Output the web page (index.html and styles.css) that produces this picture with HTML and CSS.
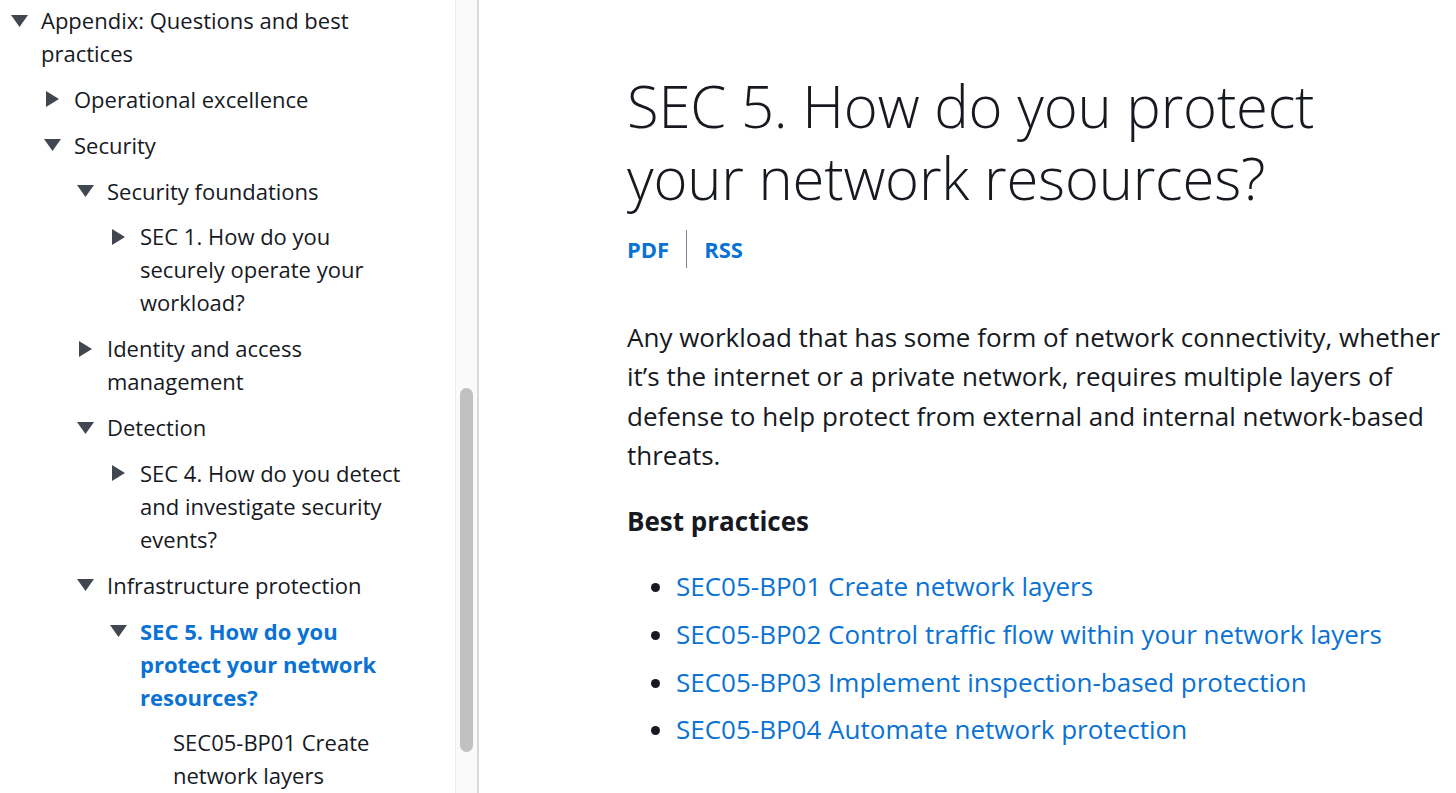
FILE: index.html
```html
<!DOCTYPE html>
<html lang="en">
<head>
<meta charset="utf-8">
<title>SEC 5. How do you protect your network resources?</title>
<link rel="stylesheet" href="styles.css">
</head>
<body>
<div class="page">
  <nav class="sidebar">
    <ul class="tree">
      <li class="node lvl0">
        <div class="row"><span class="tw"><svg class="down" viewBox="0 0 17 12"><path d="M0 0H17L8.5 12Z"/></svg></span><span class="label">Appendix: Questions and best practices</span></div>
        <ul class="tree">
          <li class="node">
            <div class="row"><span class="tw"><svg class="right" viewBox="0 0 13 16"><path d="M0 0L13 8L0 16Z"/></svg></span><span class="label">Operational excellence</span></div>
          </li>
          <li class="node">
            <div class="row"><span class="tw"><svg class="down" viewBox="0 0 17 12"><path d="M0 0H17L8.5 12Z"/></svg></span><span class="label">Security</span></div>
            <ul class="tree">
              <li class="node">
                <div class="row"><span class="tw"><svg class="down" viewBox="0 0 17 12"><path d="M0 0H17L8.5 12Z"/></svg></span><span class="label">Security foundations</span></div>
                <ul class="tree">
                  <li class="node">
                    <div class="row"><span class="tw"><svg class="right" viewBox="0 0 13 16"><path d="M0 0L13 8L0 16Z"/></svg></span><span class="label">SEC 1. How do you securely operate your workload?</span></div>
                  </li>
                </ul>
              </li>
              <li class="node">
                <div class="row"><span class="tw"><svg class="right" viewBox="0 0 13 16"><path d="M0 0L13 8L0 16Z"/></svg></span><span class="label">Identity and access management</span></div>
              </li>
              <li class="node">
                <div class="row"><span class="tw"><svg class="down" viewBox="0 0 17 12"><path d="M0 0H17L8.5 12Z"/></svg></span><span class="label">Detection</span></div>
                <ul class="tree">
                  <li class="node">
                    <div class="row"><span class="tw"><svg class="right" viewBox="0 0 13 16"><path d="M0 0L13 8L0 16Z"/></svg></span><span class="label">SEC 4. How do you detect and investigate security events?</span></div>
                  </li>
                </ul>
              </li>
              <li class="node">
                <div class="row"><span class="tw"><svg class="down" viewBox="0 0 17 12"><path d="M0 0H17L8.5 12Z"/></svg></span><span class="label">Infrastructure protection</span></div>
                <ul class="tree">
                  <li class="node">
                    <div class="row"><span class="tw"><svg class="down" viewBox="0 0 17 12"><path d="M0 0H17L8.5 12Z"/></svg></span><span class="label active">SEC 5. How do you protect your network resources?</span></div>
                    <ul class="tree">
                      <li class="node">
                        <div class="row"><span class="tw"></span><span class="label">SEC05-BP01 Create network layers</span></div>
                      </li>
                    </ul>
                  </li>
                </ul>
              </li>
            </ul>
          </li>
        </ul>
      </li>
    </ul>
  </nav>
  <div class="scrolltrack"><div class="thumb"></div></div>
  <main class="content">
    <h1 class="title">SEC 5. How do you protect your network resources?</h1>
    <div class="doclinks"><a class="doclink" href="#">PDF</a><span class="sep"></span><a class="doclink" href="#">RSS</a></div>
    <p class="intro">Any workload that has some form of network connectivity, whether it’s the internet or a private network, requires multiple layers of defense to help protect from external and internal network-based threats.</p>
    <h2 class="subhead">Best practices</h2>
    <ul class="bplist">
      <li><a href="#">SEC05-BP01 Create network layers</a></li>
      <li><a href="#">SEC05-BP02 Control traffic flow within your network layers</a></li>
      <li><a href="#">SEC05-BP03 Implement inspection-based protection</a></li>
      <li><a href="#">SEC05-BP04 Automate network protection</a></li>
    </ul>
  </main>
</div>
</body>
</html>
```
FILE: styles.css
```css
html, body {
  margin: 0;
  padding: 0;
  background: #ffffff;
}
body {
  font-family: "Open Sans", "Noto Sans", sans-serif;
  color: #16191f;
  overflow: hidden;
}
.page {
  display: flex;
  height: 793px;
  overflow: hidden;
}
.sidebar {
  width: 455px;
  flex: none;
  padding: 4px 43px 0 11px;
  box-sizing: border-box;
  font-size: 22px;
  line-height: 33px;
}
.tree {
  list-style: none;
  margin: 0;
  padding: 0;
}
.tree .tree {
  padding-left: 33px;
}
.node > .tree > .node,
.lvl0 > .tree > .node {
  margin-top: 12.85px;
}
.row {
  display: flex;
  align-items: flex-start;
}
.tw {
  flex: none;
  width: 17px;
  height: 33px;
  margin-right: 13px;
  display: flex;
  align-items: center;
  justify-content: center;
}
.tw svg {
  fill: #414750;
  display: block;
}
.tw .down {
  width: 17px;
  height: 12px;
}
.tw .right {
  width: 13px;
  height: 16px;
}
.label {
  flex: 1;
  min-width: 0;
}
.label.active {
  color: #0972d3;
  font-weight: 700;
}
.scrolltrack {
  flex: none;
  width: 24px;
  box-sizing: border-box;
  border-left: 1px solid #ececec;
  border-right: 2px solid #d9d9d9;
  background: #fafafa;
  padding-top: 388px;
  display: flex;
  justify-content: center;
}
.thumb {
  width: 13px;
  height: 364px;
  border-radius: 7px;
  background: #c1c1c1;
}
.content {
  flex: 1;
  padding: 0 0 0 148px;
  box-sizing: border-box;
}
.title {
  margin: 70px 0 0;
  font-size: 58px;
  font-weight: 300;
  line-height: 72px;
  max-width: 720px;
  letter-spacing: -0.2px;
  color: #16191f;
}
.doclinks {
  display: flex;
  align-items: center;
  margin-top: 16px;
  height: 38px;
}
.doclink {
  color: #0972d3;
  font-weight: 700;
  font-size: 22px;
  text-decoration: none;
}
.sep {
  width: 1px;
  height: 38px;
  background: #7d8998;
  margin: 0 17px;
}
.intro {
  margin: 50px 0 0;
  font-size: 26px;
  line-height: 39.3px;
  max-width: 822px;
}
.subhead {
  margin: 27px 0 0;
  font-size: 26px;
  line-height: 39px;
  font-weight: 700;
}
.bplist {
  margin: 26px 0 0;
  padding-left: 49px;
  font-size: 26px;
  line-height: 39px;
}
.bplist li {
  margin-bottom: 8.7px;
}
.bplist a {
  color: #0972d3;
  text-decoration: none;
}
```
